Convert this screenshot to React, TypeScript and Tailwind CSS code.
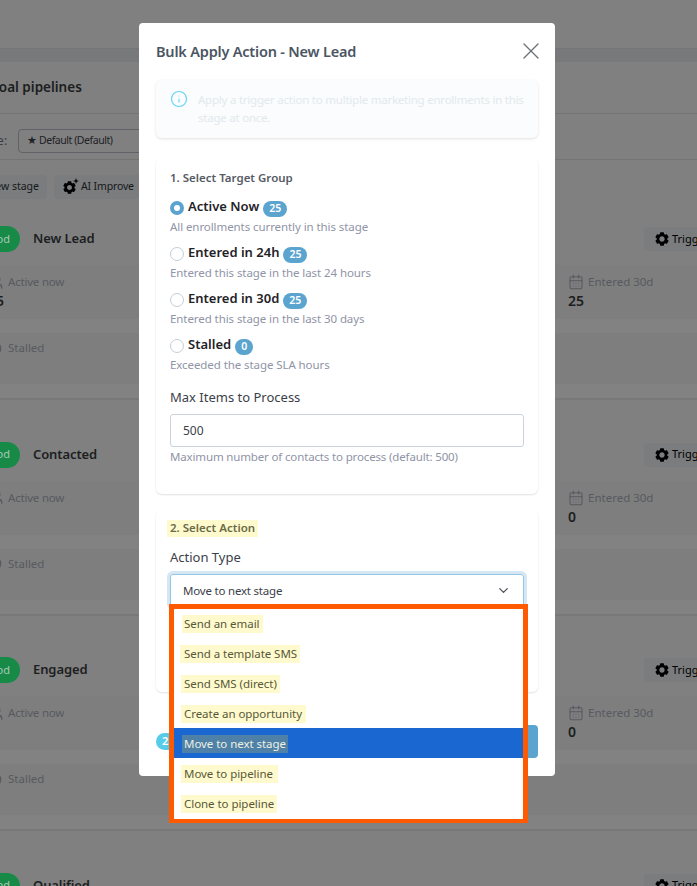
import { BiSolidCog } from "react-icons/bi";
import { CalendarDays, ChevronDown, Clock, Info, Users, X } from "lucide-react";

const font = { fontFamily: '"Noto Sans", sans-serif' };

function Stage({ title, a, b }: { title: string; a: string; b: string }) {
  return (
    <div className="mb-[26.5px] w-[760px] -ml-[20px] shrink-0">
      <div className="flex h-[54px] items-start pt-[15px]">
        <div className="flex h-[26px] w-[40px] items-center justify-end rounded-full bg-[#178a48] pr-[10px] text-[11px] text-[#a9c9b6]">od</div>
        <div className="ml-[13px] text-[13px] font-semibold leading-[24px] tracking-[-0.1px] text-[#1c1e21]">{title}</div>
        <div className="ml-auto mt-[1px] flex h-[24px] w-[96px] items-center gap-[2px] rounded bg-[#7a7c7d] pl-[10px] text-[11px] text-black">
          <BiSolidCog size={16} />
          Trigger
        </div>
      </div>
      <div className="flex h-[54px] justify-between bg-[#7e7e7e] pt-[8px]">
        <div className="ml-[8px]">
          <div className="flex h-[18px] items-center gap-[5px] text-[11.5px] tracking-[-0.2px] text-[#575a60]">
            <Users size={15} fill="currentColor" />
            Active now
          </div>
          <div className="text-[14px] font-semibold leading-[20px] text-[#1c1e21]">{a}</div>
        </div>
        <div className="mr-[72px] w-[100px]">
          <div className="flex h-[18px] items-center gap-[4px] text-[11.5px] text-[#575a60]">
            <CalendarDays size={16} strokeWidth={1.6} />
            Entered 30d
          </div>
          <div className="text-[14px] font-semibold leading-[20px] text-[#1c1e21]">{b}</div>
        </div>
      </div>
      <div className="h-[14px] bg-[#828282]" />
      <div className="h-[51px] bg-[#7e7e7e] pl-[7px] pt-[6px]">
        <div className="flex h-[18px] items-center gap-[6px] text-[11.5px] text-[#575a60]">
          <Clock size={15} />
          Stalled
        </div>
      </div>
      <div className="h-[14px] bg-[#828282]" />
      <div className="h-[2px] bg-[#787878]" />
    </div>
  );
}

function Group({ title, count, hint, checked }: { title: string; count: string; hint: string; checked?: boolean }) {
  return (
    <div>
      <div className="flex h-[20px] items-center">
        {checked ? (
          <span className="mr-[4px] mt-[2px] flex h-[14px] w-[14px] items-center justify-center rounded-full bg-[#5ba4cf]">
            <span className="h-[6px] w-[6px] rounded-full bg-white" />
          </span>
        ) : (
          <span className="mr-[4px] mt-[2px] h-[14px] w-[14px] rounded-full border border-[#c5ced8] bg-white" />
        )}
        <span className="text-[13px] font-semibold text-[#1f2328]">{title}</span>
        <span className="ml-[4px] mt-[3px] flex h-[16px] min-w-[18px] items-center justify-center rounded-full bg-[#5ba4cf] px-[6px] text-[10.5px] font-semibold text-white">{count}</span>
      </div>
      <div className="h-[20px] text-[11.5px] leading-[20px] tracking-[-0.08px] text-[#8f94a6]">{hint}</div>
    </div>
  );
}

const options = [
  { label: "Send an email", mark: "-ml-[2px] pl-[2px] pr-[3px]" },
  { label: "Send a template SMS", mark: "-ml-[4px] pl-[4px] pr-[3px]" },
  { label: "Send SMS (direct)", mark: "-ml-[3px] pl-[3px] pr-[3px]" },
  { label: "Create an opportunity", mark: "-ml-[3px] pl-[3px] pr-[4px]" },
  { label: "Move to next stage", mark: "-ml-[2px] pl-[2px] pr-[2px]", on: true },
  { label: "Move to pipeline", mark: "-ml-[3px] pl-[3px] pr-[5px]" },
  { label: "Clone to pipeline", mark: "-ml-[3px] pl-[3px] pr-[3px]" },
];

export default function App() {
  return (
    <div className="relative h-[886px] w-[697px] overflow-hidden bg-[#808080]" style={font}>
      {/* Page behind the backdrop */}
      <div className="flex flex-col">
        <div className="h-[48px]" />
        <div className="h-[14px] border-t border-[#747576] bg-[#77797a]" />
        <div className="flex h-[52px] items-center border-b border-[#747474]">
          <span className="-ml-[11px] text-[13.5px] font-semibold text-[#1c1e21]">Goal pipelines</span>
        </div>
        <div className="flex h-[46px] items-center border-b border-[#747474] pt-[9px]">
          <span className="-ml-[41px] text-[12px] text-[#3a3d42]">Pipeline:</span>
          <div className="ml-[11px] flex h-[24px] w-[200px] items-center rounded border border-[#5f6266] pl-[8px] text-[10.5px] tracking-[-0.45px] text-[#202226]">★ Default (Default)</div>
        </div>
        <div className="flex h-[51px] items-start gap-[7px] pt-[15px]">
          <div className="-ml-[30px] flex h-[24px] w-[77px] items-center justify-end rounded bg-[#7a7c7d] pr-[8px] text-[10.5px] text-[#16181b]">New stage</div>
          <div className="flex h-[24px] w-[90px] items-center gap-[3px] rounded bg-[#7a7c7d] pl-[8px] text-[10.5px] tracking-[-0.15px] text-[#16181b]">
            <span className="relative flex w-[16px] items-center">
              <BiSolidCog size={15} className="text-black" />
              <svg viewBox="0 0 10 10" className="absolute -right-[1px] -top-[2px] h-[6px] w-[6px] fill-black">
                <path d="M5 0 L6.2 3.8 L10 5 L6.2 6.2 L5 10 L3.8 6.2 L0 5 L3.8 3.8 Z" />
              </svg>
            </span>
            AI Improve
          </div>
        </div>
        <Stage title="New Lead" a="25" b="25" />
        <Stage title="Contacted" a="0" b="0" />
        <Stage title="Engaged" a="0" b="0" />
        <Stage title="Qualified" a="0" b="0" />
      </div>

      {/* Modal */}
      <div className="absolute left-[139px] top-[23px] flex h-[753px] w-[416px] flex-col rounded-[4px] bg-white px-[17px]">
        <div className="flex h-[57px] items-center justify-between">
          <div className="text-[14.5px] font-semibold tracking-[-0.2px] text-[#4b5563]">Bulk Apply Action - New Lead</div>
          <X size={28} strokeWidth={1.2} className="-mr-[7px] -mt-[2px] text-[#6f7276]" />
        </div>
        <div className="flex h-[58px] gap-[10px] rounded-[6px] bg-[#fafcfd] pl-[14px] pr-[10px] pt-[11px] shadow-[0_1px_3px_rgba(0,0,0,0.12)]">
          <Info size={18} strokeWidth={1.5} className="mt-[-1px] shrink-0 text-[#62d2f2]" />
          <div className="text-[11.5px] leading-[18px] tracking-[-0.23px] text-[#e2e9ee]">Apply a trigger action to multiple marketing enrollments in this stage at once.</div>
        </div>
        <div className="mt-[20px] h-[336px] rounded-[6px] px-[14px] pt-[10px] shadow-[0_1px_2px_rgba(0,0,0,0.12)]">
          <div className="mb-[9px] text-[11.5px] font-semibold leading-[20px] text-[#565b66]">1. Select Target Group</div>
          <div className="flex flex-col gap-[6px]">
            <Group checked title="Active Now" count="25" hint="All enrollments currently in this stage" />
            <Group title="Entered in 24h" count="25" hint="Entered this stage in the last 24 hours" />
            <Group title="Entered in 30d" count="25" hint="Entered this stage in the last 30 days" />
            <Group title="Stalled" count="0" hint="Exceeded the stage SLA hours" />
          </div>
          <div className="mt-[12px] text-[13px] leading-[20px] text-[#3b4149]">Max Items to Process</div>
          <div className="mt-[7px] flex h-[33px] w-[354px] items-center rounded-[3px] border border-[#cbd3de] pl-[12px] text-[12px] text-[#3b4149]">500</div>
          <div className="mt-[1px] text-[11.5px] leading-[18px] tracking-[-0.15px] text-[#8f94a6]">Maximum number of contacts to process (default: 500)</div>
        </div>
        <div className="mt-[16px] h-[182px] rounded-[6px] px-[14px] pt-[10px] shadow-[0_1px_2px_rgba(0,0,0,0.12)]">
          <div className="-ml-[3px] flex h-[17px] w-fit items-center bg-[#fffacd] px-[3px] pb-[2px] text-[11.5px] font-semibold text-[#6a6b47]">2. Select Action</div>
          <div className="mt-[10px] text-[13px] leading-[20px] text-[#3b4149]">Action Type</div>
          <div className="mt-[7px] flex h-[33px] w-[354px] items-center justify-between rounded-[3px] border border-[#93c5e6] pl-[12px] pr-[12px] text-[11.5px] tracking-[-0.2px] text-[#3b4149] shadow-[0_0_0_3px_#d6e7f4]">
            Move to next stage
            <ChevronDown size={15} className="text-[#4b4f55]" />
          </div>
        </div>
        <div className="mt-[33px] flex h-[33px] items-center justify-between">
          <div className="flex h-[17px] w-[60px] items-center rounded-full bg-[#57cbea] pl-[6px] text-[11px] font-semibold text-white">25</div>
          <div className="h-[33px] w-[220px] rounded-[4px] bg-[#5ba4cf]" />
        </div>
      </div>

      {/* Open select list */}
      <div className="absolute left-[169px] top-[604px] h-[219px] w-[359px] border-[5px] border-[#ff5a00] bg-white">
        {options.map((o) => (
          <div
            key={o.label}
            className={`flex h-[30px] items-center pl-[10px] text-[11.5px] tracking-[-0.05px] ${o.on ? "-mt-[1px] mb-[1px] bg-[#1a67d2] pt-[1px]" : "bg-white"}`}
          >
            <span className={`flex h-[18px] items-center ${o.mark} ${o.on ? "bg-[#4f80a8] text-[#edf1e0]" : "bg-[#fffacd] text-[#57583a]"}`}>{o.label}</span>
          </div>
        ))}
      </div>
    </div>
  );
}
